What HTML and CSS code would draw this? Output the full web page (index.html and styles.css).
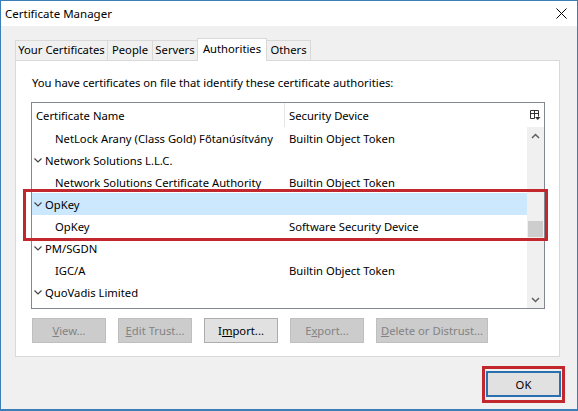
FILE: index.html
```html
<!DOCTYPE html>
<html>
<head>
<meta charset="utf-8">
<link rel="stylesheet" href="styles.css">
</head>
<body>
<div class="window">
  <div class="titlebar">
    <span class="title">Certificate Manager</span>
    <svg class="close" width="11" height="11" viewBox="0 0 11 11"><path d="M0.5 0.5 L10.5 10.5 M10.5 0.5 L0.5 10.5" stroke="#000" stroke-width="1" fill="none"/></svg>
  </div>
  <div class="client">
    <div class="tabs">
      <div class="tab tab-yours">Your Certificates</div>
      <div class="tab tab-people">People</div>
      <div class="tab tab-servers">Servers</div>
      <div class="tab tab-auth active">Authorities</div>
      <div class="tab tab-others">Others</div>
    </div>
    <div class="panel">
      <div class="intro">You have certificates on file that identify these certificate authorities:</div>
      <div class="tree">
        <div class="tree-main">
          <div class="header">
            <div class="col1">Certificate Name</div>
            <div class="col2">Security Device</div>
          </div>
          <div class="row child"><div class="col1">NetLock Arany (Class Gold) Főtanúsítvány</div><div class="col2">Builtin Object Token</div></div>
          <div class="row parent"><div class="col1"><svg class="chev" width="8" height="5" viewBox="0 0 8 5"><path d="M0.5 0.5 L4 4 L7.5 0.5" stroke="#444" stroke-width="1.2" fill="none"/></svg>Network Solutions L.L.C.</div><div class="col2"></div></div>
          <div class="row child"><div class="col1">Network Solutions Certificate Authority</div><div class="col2">Builtin Object Token</div></div>
          <div class="row parent selected"><div class="col1"><svg class="chev" width="8" height="5" viewBox="0 0 8 5"><path d="M0.5 0.5 L4 4 L7.5 0.5" stroke="#444" stroke-width="1.2" fill="none"/></svg>OpKey</div><div class="col2"></div></div>
          <div class="row child"><div class="col1">OpKey</div><div class="col2">Software Security Device</div></div>
          <div class="row parent"><div class="col1"><svg class="chev" width="8" height="5" viewBox="0 0 8 5"><path d="M0.5 0.5 L4 4 L7.5 0.5" stroke="#444" stroke-width="1.2" fill="none"/></svg>PM/SGDN</div><div class="col2"></div></div>
          <div class="row child"><div class="col1">IGC/A</div><div class="col2">Builtin Object Token</div></div>
          <div class="row parent"><div class="col1"><svg class="chev" width="8" height="5" viewBox="0 0 8 5"><path d="M0.5 0.5 L4 4 L7.5 0.5" stroke="#444" stroke-width="1.2" fill="none"/></svg>QuoVadis Limited</div><div class="col2"></div></div>
        </div>
        <div class="vscroll">
          <div class="picker">
            <svg width="11" height="11" viewBox="0 0 11 11"><path d="M0.5 0.5 H8.5 V6.5 M0.5 0.5 V8.5 H4.5 M0.5 3.5 H8.5 M4.5 0.5 V8.5" stroke="#333" fill="none"/><path d="M5 7 H10.5 L7.75 10 Z" fill="#333"/></svg>
          </div>
          <div class="arrow"><svg width="9" height="6" viewBox="0 0 9 6"><path d="M1 5 L4.5 1.5 L8 5" stroke="#606060" stroke-width="1.5" fill="none"/></svg></div>
          <div class="track"><div class="thumb"></div></div>
          <div class="arrow"><svg width="9" height="6" viewBox="0 0 9 6"><path d="M1 1 L4.5 4.5 L8 1" stroke="#606060" stroke-width="1.5" fill="none"/></svg></div>
        </div>
      </div>
      <div class="buttons">
        <div class="btn disabled"><span class="u">V</span>iew...</div>
        <div class="btn disabled"><span class="u">E</span>dit Trust...</div>
        <div class="btn">I<span class="u">m</span>port...</div>
        <div class="btn disabled">E<span class="u">x</span>port...</div>
        <div class="btn disabled wide"><span class="u">D</span>elete or Distrust...</div>
      </div>
    </div>
    <div class="footer">
      <div class="btn ok">OK</div>
    </div>
  </div>
  <div class="annot annot-rows"></div>
  <div class="annot annot-ok"></div>
</div>
</body>
</html>
```

FILE: styles.css
```css
html, body {
  margin: 0;
  padding: 0;
}
body {
  width: 578px;
  height: 411px;
  overflow: hidden;
  font-family: "Noto Sans", "DejaVu Sans", sans-serif;
  font-size: 11.25px;
  color: #000;
}
.window {
  position: relative;
  box-sizing: border-box;
  width: 578px;
  height: 411px;
  border: 1px solid #3b7fb6;
  border-bottom-width: 2px;
  background: #f0f0f0;
  display: flex;
  flex-direction: column;
}
.titlebar {
  height: 25px;
  background: #fff;
  display: flex;
  align-items: center;
  justify-content: space-between;
  padding: 0 10px 0 4px;
}
.title {
  font-size: 11.5px;
  line-height: 16px;
}
.close {
  display: block;
}
.client {
  flex: 1;
  display: flex;
  flex-direction: column;
  padding: 12px 0 0 14px;
}
.tabs {
  display: flex;
  align-items: flex-end;
  height: 22px;
  position: relative;
  z-index: 1;
}
.tab {
  box-sizing: border-box;
  height: 20px;
  line-height: 18px;
  text-align: center;
  border: 1px solid #d9d9d9;
  border-bottom: none;
  margin-right: -1px;
  background: #f0f0f0;
  white-space: nowrap;
}
.tab-yours { width: 93px; }
.tab-people { width: 46px; }
.tab-servers { width: 46px; }
.tab-auth { width: 70px; }
.tab-others { width: 45px; }
.tab.active {
  height: 23px;
  margin-bottom: -1px;
  background: #fff;
  line-height: 20px;
  padding-bottom: 2px;
}
.panel {
  box-sizing: border-box;
  width: 545px;
  height: 297px;
  background: #fff;
  border: 1px solid #d9d9d9;
  padding: 14px 14px 13px 15px;
  display: flex;
  flex-direction: column;
}
.intro {
  line-height: 16px;
  height: 16px;
  padding-left: 1px;
  margin-bottom: 11px;
  white-space: nowrap;
}
.tree {
  box-sizing: border-box;
  height: 208px;
  border: 1px solid #828790;
  display: flex;
  overflow: hidden;
}
.tree-main {
  flex: 1;
  display: flex;
  flex-direction: column;
  min-width: 0;
}
.header {
  height: 24px;
  display: flex;
  flex-shrink: 0;
}
.header .col1 {
  border-right: 1px solid #e5e5e5;
}
.col1 {
  box-sizing: border-box;
  width: 253px;
  flex-shrink: 0;
  padding-left: 4px;
  display: flex;
  align-items: center;
  white-space: nowrap;
}
.col2 {
  flex: 1;
  padding-left: 4px;
  display: flex;
  align-items: center;
  white-space: nowrap;
}
.row {
  height: 22px;
  display: flex;
  flex-shrink: 0;
}
.row.child .col1 {
  padding-left: 23px;
}
.row.parent .col1 {
  padding-left: 1px;
}
.chev {
  margin: 0 3px 0 1px;
  flex-shrink: 0;
}
.row.selected {
  background: #cce8ff;
}
.vscroll {
  width: 17px;
  flex-shrink: 0;
  display: flex;
  flex-direction: column;
}
.picker {
  height: 24px;
  background: #fff;
  display: flex;
  align-items: center;
  justify-content: center;
}
.arrow {
  height: 17px;
  background: #f0f0f0;
  display: flex;
  align-items: center;
  justify-content: center;
  flex-shrink: 0;
}
.arrow svg {
  display: block;
}
.track {
  flex: 1;
  background: #f0f0f0;
  display: flex;
  flex-direction: column;
  align-items: center;
}
.thumb {
  margin-top: 77px;
  width: 15px;
  height: 16px;
  background: #cdcdcd;
}
.buttons {
  display: flex;
  gap: 12px;
  margin-top: 9px;
  padding-left: 1px;
}
.btn {
  box-sizing: border-box;
  width: 74px;
  height: 25px;
  border: 1px solid #adadad;
  background: #e1e1e1;
  display: flex;
  align-items: center;
  justify-content: center;
  white-space: nowrap;
}
.btn.wide {
  width: 112px;
}
.btn.disabled {
  background: #cccccc;
  border-color: #bfbfbf;
  color: #838383;
}
.u {
  text-decoration: underline;
}
.footer {
  display: flex;
  justify-content: flex-end;
  padding: 14px 16px 0 0;
}
.btn.ok {
  width: 75px;
  height: 26px;
  border: 2px solid #2a6fb0;
}
.annot {
  position: absolute;
  box-sizing: border-box;
  border: 3px solid #c1272d;
  pointer-events: none;
}
.annot-rows {
  left: 22px;
  top: 188px;
  width: 525px;
  height: 52px;
}
.annot-ok {
  left: 481px;
  top: 365px;
  width: 83px;
  height: 37px;
}
```
